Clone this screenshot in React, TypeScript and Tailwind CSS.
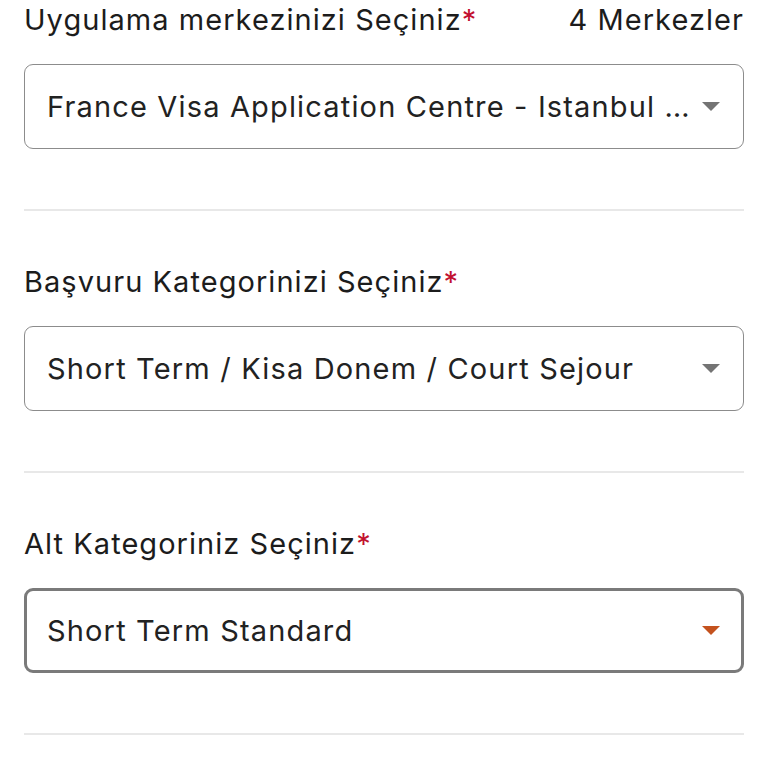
import React from 'react';

type Field = {
  label: string;
  value: string;
  focused?: boolean;
  extra?: string;
};

const fields: Field[] = [
  {
    label: 'Uygulama merkezinizi Seçiniz',
    value: 'France Visa Application Centre - Istanbul …',
    extra: '4 Merkezler',
  },
  {
    label: 'Başvuru Kategorinizi Seçiniz',
    value: 'Short Term / Kisa Donem / Court Sejour',
  },
  {
    label: 'Alt Kategoriniz Seçiniz',
    value: 'Short Term Standard',
    focused: true,
  },
];

function Caret({ focused }: { focused?: boolean }) {
  return (
    <svg width="18" height="9" viewBox="0 0 18 9" className="shrink-0">
      <path d="M0 0 H18 L9 9 Z" fill={focused ? '#c4521e' : '#747474'} />
    </svg>
  );
}

function SelectField({ label, value, focused, extra }: Field) {
  return (
    <div className="flex flex-col">
      <div className="flex h-10 items-center justify-between text-[29px] tracking-[0.036em] text-[#1c1c1c]">
        <span>
          {label}
          <span className="text-[#c2112f]">*</span>
        </span>
        {extra && <span>{extra}</span>}
      </div>
      <div
        className={`mt-6 flex h-[85px] items-center justify-between gap-2 rounded-[9px] bg-white ${
          focused
            ? 'border-[3px] border-[#7a7a7a] pl-[20px] pr-[21px]'
            : 'border-[1.5px] border-[#8c8c8c] pl-[22px] pr-[23px]'
        }`}
      >
        <span className="min-w-0 overflow-hidden whitespace-nowrap text-[29px] tracking-[0.04em] text-[#222]">
          {value}
        </span>
        <Caret focused={focused} />
      </div>
      <div className="mt-[60px] h-[2px] bg-[#e8e8e8]" />
    </div>
  );
}

export default function App() {
  return (
    <div
      className="flex h-[768px] w-[768px] flex-col gap-[51px] overflow-hidden bg-white px-6"
      style={{ fontFamily: 'Inter, "Noto Sans", sans-serif' }}
    >
      {fields.map((field) => (
        <SelectField key={field.label} {...field} />
      ))}
    </div>
  );
}
